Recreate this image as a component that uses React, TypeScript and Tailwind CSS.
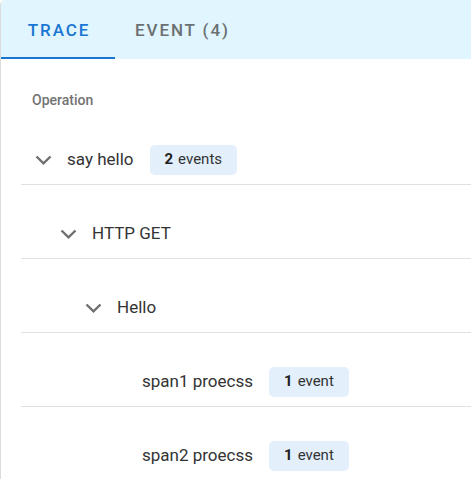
import React from "react";

const Chevron = () => (
  <svg width="17" height="10" viewBox="0 0 17 10" className="shrink-0">
    <polyline points="1.5,1.5 8.5,8.3 15.5,1.5" fill="none" stroke="#6f6f6f" strokeWidth="2.4" />
  </svg>
);

const Badge = ({ n, label }: { n: number; label: string }) => (
  <span className="ml-[16px] inline-flex h-[30px] items-center rounded-[5px] bg-[#e3f0fc] px-[15px] text-[15px] text-[#333]">
    <span className="font-bold text-[#222]">{n}</span>
    <span className="ml-[5px]">{label}</span>
  </span>
);

const rows: { label: string; level: number; chevron: boolean; badge?: [number, string] }[] = [
  { label: "say hello", level: 0, chevron: true, badge: [2, "events"] },
  { label: "HTTP GET", level: 1, chevron: true },
  { label: "Hello", level: 2, chevron: true },
  { label: "span1 proecss", level: 3, chevron: false, badge: [1, "event"] },
  { label: "span2 proecss", level: 3, chevron: false, badge: [1, "event"] },
];

const pads = ["pl-[14px]", "pl-[39px]", "pl-[64px]", "pl-[89px]"];

export default function App() {
  return (
    <div className="h-[479px] w-[471px] overflow-hidden bg-white" style={{ fontFamily: "Roboto, 'Noto Sans', sans-serif" }}>
      <div className="w-[600px] rounded-tl-[5px] border-l border-[#dcdcdc] bg-white">
        <div className="flex h-[59px] rounded-tl-[5px] bg-[#e1f5fe]">
          <div className="flex w-[114px] flex-col">
            <div className="flex flex-1 items-center justify-center pt-[5px] pl-[2px] text-[17px] font-medium tracking-[1.9px] text-[#1976d2]">
              TRACE
            </div>
            <div className="h-[2px] bg-[#1976d2]" />
          </div>
          <div className="flex items-center px-[20px] pt-[3px] text-[17px] font-medium tracking-[1.9px] text-[#6b7072]">
            EVENT (4)
          </div>
        </div>
        <div className="pl-[20px]">
          <div className="pl-[11px] pt-[32px] text-[14px] font-medium leading-[18px] text-[#737373]">Operation</div>
          <div className="mt-[26px]">
            {rows.map((r, i) => (
              <div key={i} className={i > 0 ? "mt-[24px]" : ""}>
                <div className={`flex h-[50px] items-center ${pads[r.level]} border-b border-[#e0e0e0]`}>
                  {r.chevron ? <Chevron /> : <span className="w-[17px]" />}
                  <span className="ml-[15px] text-[17px] text-[#333]">{r.label}</span>
                  {r.badge && <Badge n={r.badge[0]} label={r.badge[1]} />}
                </div>
              </div>
            ))}
          </div>
        </div>
      </div>
    </div>
  );
}
